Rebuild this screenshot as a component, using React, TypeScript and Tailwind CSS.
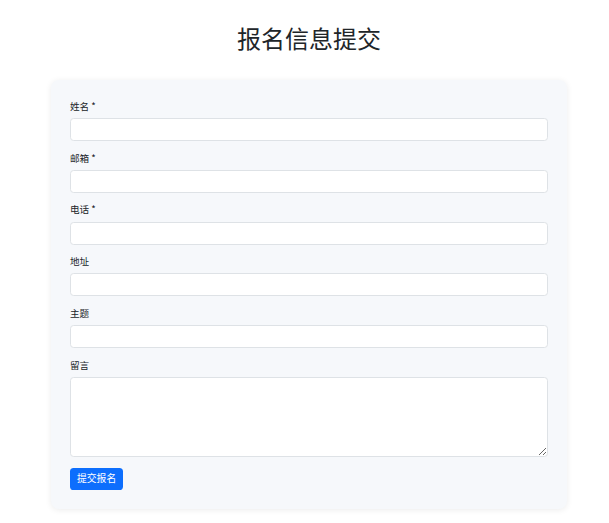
const FIELDS = [
  { label: '姓名', required: true },
  { label: '邮箱', required: true },
  { label: '电话', required: true },
  { label: '地址', required: false },
  { label: '主题', required: false },
];

const inputCls =
  'block w-full h-[23px] px-[7px] text-[9.6px] bg-white border border-[#dee2e6] rounded-[3.6px] outline-none';

export default function App() {
  return (
    <div className="min-h-screen bg-white text-[#212529] font-['Noto_Sans_CJK_SC','Noto_Sans',sans-serif]">
      <div className="ml-[51px] w-[516px] pt-[24px]">
        <h1 className="text-center text-[24px] leading-[1.2] font-normal">报名信息提交</h1>

        <form
          className="mt-[27px] bg-[#f6f8fb] rounded-[8px] shadow-[0_1px_6px_rgba(0,0,0,0.08)] p-[19px]"
          onSubmit={(e) => e.preventDefault()}
        >
          {FIELDS.map((f) => (
            <div key={f.label} className="mb-[9.6px]">
              <label className="block text-[9.6px] leading-[1.5] mb-[4.8px]">
                {f.label}
                {f.required && ' *'}
              </label>
              <input className={inputCls} type="text" />
            </div>
          ))}

          <div className="mb-[11px]">
            <label className="block text-[9.6px] leading-[1.5] mb-[4.8px]">留言</label>
            <textarea className="block w-full h-[80px] px-[7px] py-[4px] text-[9.6px] bg-white border border-[#dee2e6] rounded-[3.6px] outline-none" />
          </div>

          <button
            type="submit"
            className="block h-[22px] px-[7px] text-[9.8px] leading-none text-white bg-[#0d6efd] rounded-[3.6px]"
          >
            提交报名
          </button>
        </form>
      </div>
    </div>
  );
}
